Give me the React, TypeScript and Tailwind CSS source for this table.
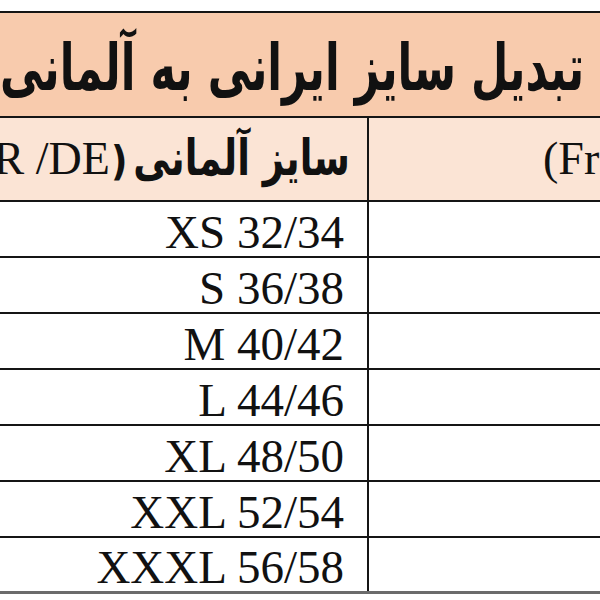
const rows = ["XS 32/34", "S 36/38", "M 40/42", "L 44/46", "XL 48/50", "XXL 52/54", "XXXL 56/58"];

const fa = { fontFamily: '"DejaVu Sans", sans-serif' };
const serif = { fontFamily: '"Liberation Serif", "Times New Roman", serif' };

export default function App() {
  return (
    <div className="w-[600px] h-[600px] overflow-hidden bg-white pt-[11px] text-[#111]">
      {/* title band, cropped on the right */}
      <div
        className="h-[107px] bg-[#f8cbad] border-y-2 border-[#151515] flex items-center overflow-hidden whitespace-nowrap pt-[8px]"
        dir="ltr"
      >
        <span dir="rtl" className="text-[43px] font-bold leading-none scale-y-[1.5]" style={fa}>
          راهنمای تبدیل سایز ایرانی به آلمانی
        </span>
      </div>

      {/* column headers */}
      <div className="grid grid-cols-[369px_1fr] h-[84px] bg-[#fbe4d5] border-b-2 border-[#151515]">
        <div className="border-r-2 border-[#151515] flex justify-end items-center overflow-hidden whitespace-nowrap pr-[17px]" dir="ltr">
          <span className="text-[46px] leading-none" style={serif}>(EUR /DE</span>
          <span className="text-[36px] font-bold leading-none scale-y-[1.15] pt-[4px] ml-[1px]" style={fa}>)</span>
          <span dir="rtl" className="text-[37px] font-bold leading-none scale-y-[1.35] ml-[6px] pb-[2px]" style={fa}>
            سایز آلمانی
          </span>
        </div>
        <div className="flex items-center overflow-hidden whitespace-nowrap pl-[174px]">
          <span className="text-[46px] leading-none" style={serif}>(French)</span>
        </div>
      </div>

      {rows.map((r, i) => (
        <div
          key={r}
          className={
            i === rows.length - 1
              ? "grid grid-cols-[369px_1fr] h-[56px] border-b-[3px] border-[#6b6b6b]"
              : "grid grid-cols-[369px_1fr] h-[56px] border-b-2 border-[#151515]"
          }
        >
          <div className="border-r-2 border-[#151515] flex justify-end items-center pr-[23px] pt-[6px]">
            <span className="text-[47px] leading-none" style={serif}>{r}</span>
          </div>
          <div />
        </div>
      ))}
    </div>
  );
}
